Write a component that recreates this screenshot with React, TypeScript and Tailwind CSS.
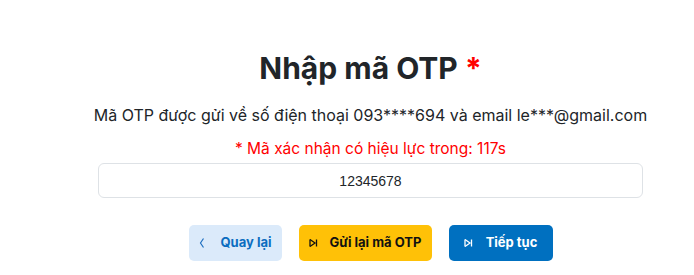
import React, { useState } from 'react';

function ChevronLeft() {
  return (
    <svg width="8" height="12" viewBox="0 0 8 12" fill="none" stroke="currentColor" strokeWidth="1.2">
      <path d="M5.5 1.5 L2.5 6 L5.5 10.5" />
    </svg>
  );
}

function SendIcon() {
  return (
    <svg width="9" height="10" viewBox="0 0 9 10" fill="none" stroke="currentColor" strokeWidth="1.3">
      <path d="M1 1.5 V8.5" />
      <path d="M1 1.5 L6 5 L1 8.5" />
      <path d="M7.5 1.5 V8.5" />
    </svg>
  );
}

export default function App() {
  const [code, setCode] = useState('12345678');

  return (
    <div className="w-[694px] h-[275px] bg-white overflow-hidden" style={{ fontFamily: 'Inter, "Noto Sans", sans-serif' }}>
      <div className="ml-[98px] w-[545px] flex flex-col items-center pt-[48px]">
        <h1 className="text-[30px] font-bold text-[#212529] leading-[40px] whitespace-nowrap">
          Nhập mã OTP <span className="text-[#ff0000]">*</span>
        </h1>

        <p className="mt-[16px] text-[16px] text-[#212529] leading-[22px] whitespace-nowrap">
          Mã OTP được gửi về số điện thoại 093****694 và email le***@gmail.com
        </p>

        <p className="mt-[12px] text-[15.5px] text-[#ff0000] leading-[22px] whitespace-nowrap">
          * Mã xác nhận có hiệu lực trong: 117s
        </p>

        {/* Ô nhập mã */}
        <input
          value={code}
          onChange={(e) => setCode(e.target.value)}
          className="mt-[3px] w-full h-[35px] border border-[#dee2e6] rounded-[6px] text-center text-[14px] text-[#212529] outline-none font-['Liberation_Sans',sans-serif]"
        />

        <div className="mt-[27px] flex gap-[17px]">
          <button className="h-[36px] w-[93px] rounded-[5px] bg-[#dbeafa] text-[13px] font-bold flex items-center justify-center gap-[14px]">
            <span className="text-[#1e6fc0]"><ChevronLeft /></span>
            <span className="text-[#0b6dc0]">Quay lại</span>
          </button>
          <button className="h-[36px] w-[133px] rounded-[5px] bg-[#ffc107] text-[#111] text-[13px] font-bold flex items-center justify-center gap-[12px]">
            <SendIcon />
            <span>Gửi lại mã OTP</span>
          </button>
          <button className="h-[36px] w-[104px] rounded-[5px] bg-[#0070c0] text-white text-[13px] font-bold flex items-center justify-center gap-[13px]">
            <SendIcon />
            <span>Tiếp tục</span>
          </button>
        </div>
      </div>
    </div>
  );
}
